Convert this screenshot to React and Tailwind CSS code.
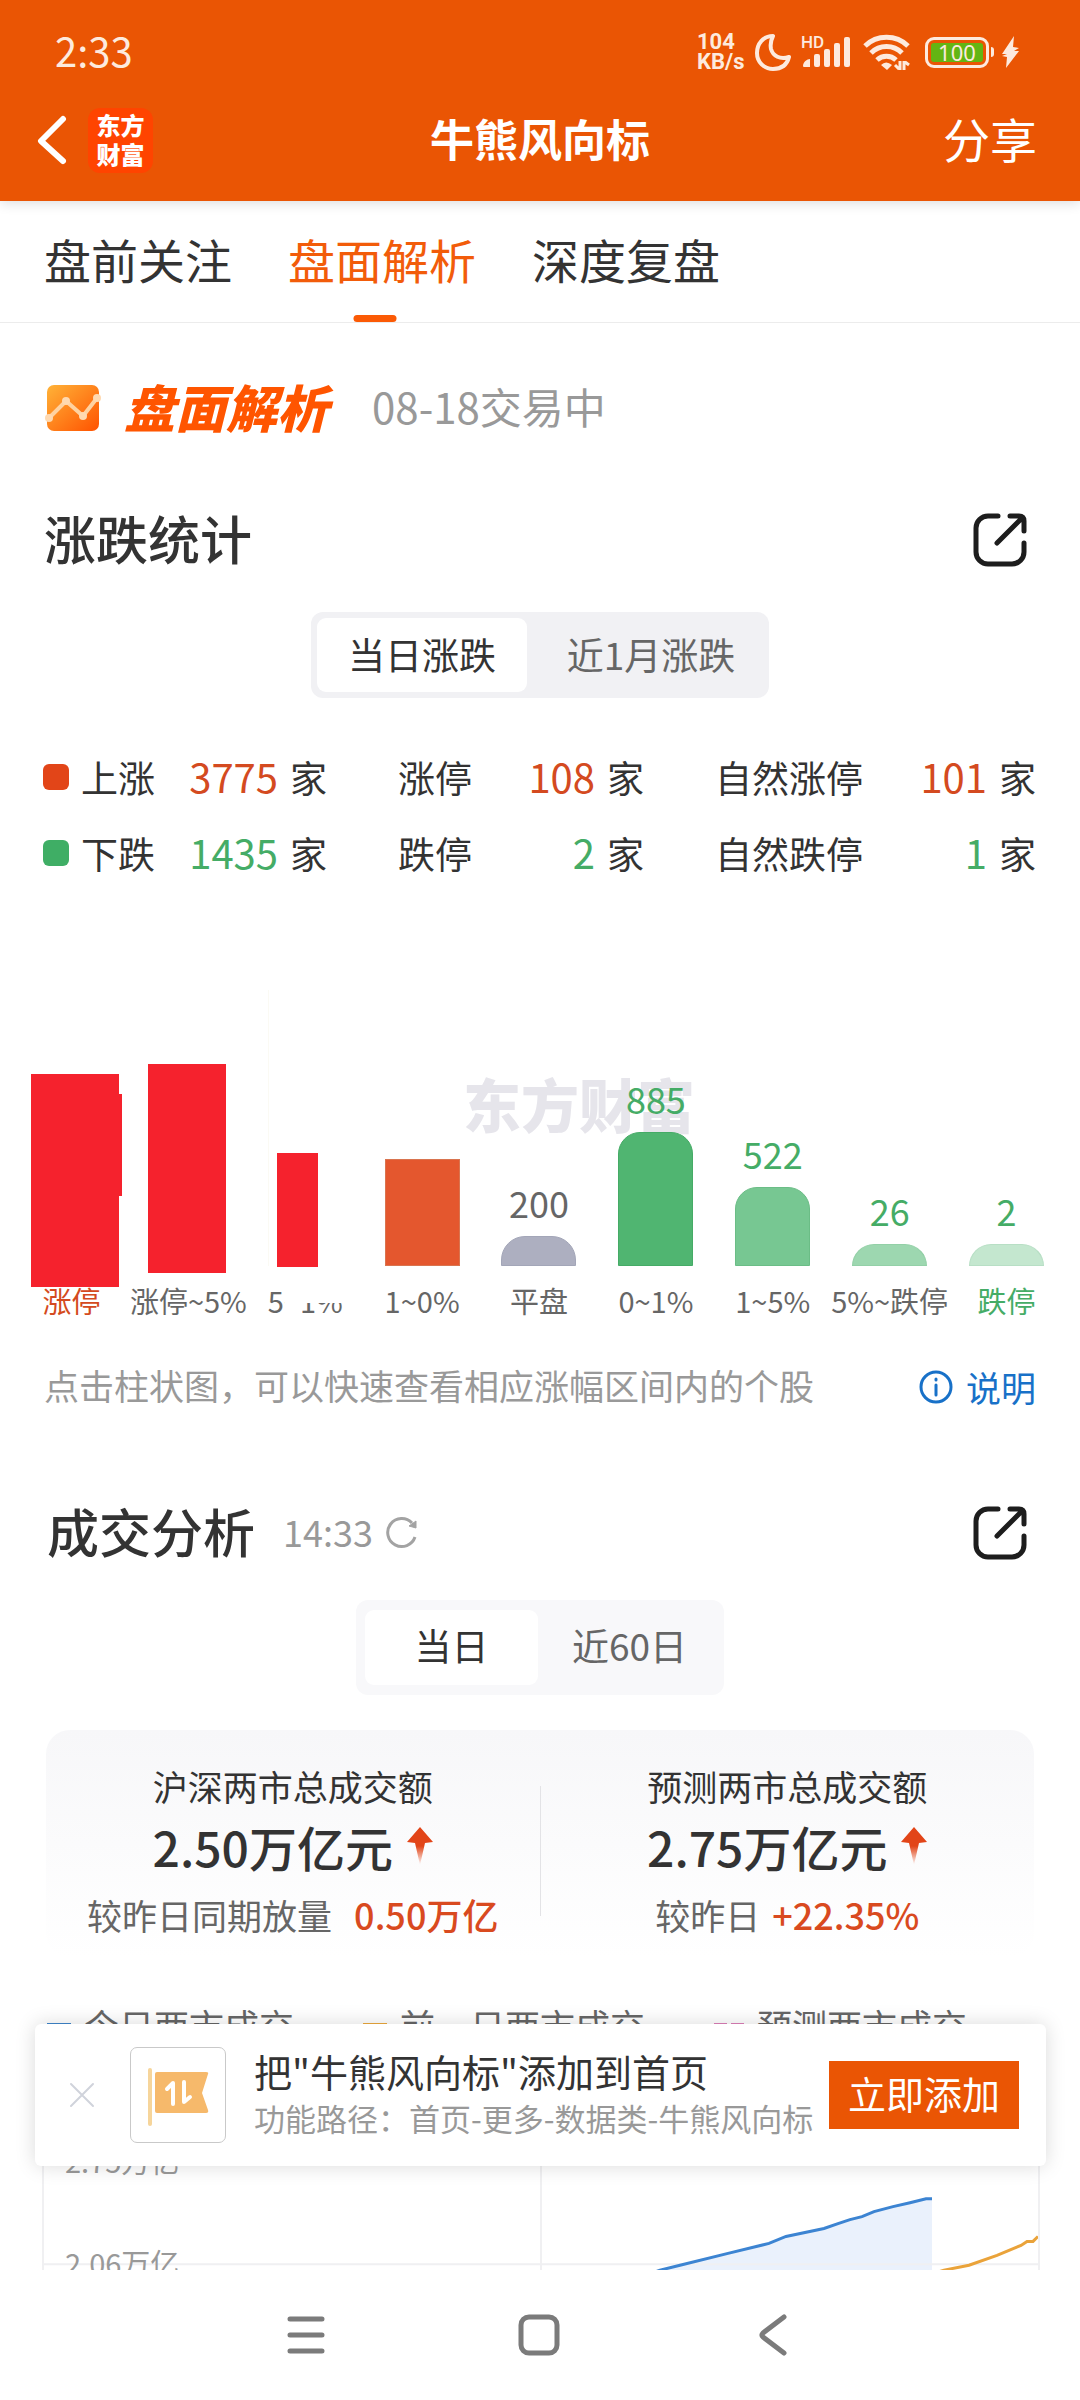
import React from "react";

const fontStack = "font-['Noto_Sans_CJK_SC','Noto_Sans',sans-serif]";

function StatusBar() {
  return (
    <div className="flex h-[104px] items-center justify-between pl-[55px] pr-[60px] text-[#fdeade]">
      <span className="pb-1 text-[40px] leading-[48px]">2:33</span>
      <div className="flex items-center">
        <div className="w-[58px] font-['Roboto',sans-serif] text-[22px] font-bold leading-[20px]">
          <div>104</div>
          <div>KB/s</div>
        </div>
        <svg width="36" height="38" viewBox="0 0 36 38" fill="none" stroke="currentColor" strokeWidth="4" strokeLinejoin="round" aria-hidden="true">
          <path d="M18 3C8 3 2 11 2 20c0 9 7 16 16 16 8 0 14-4 16-12-9 3-16-1-18-8-1-5 0-9 2-13Z" />
        </svg>
        <div className="relative ml-[10px] h-[34px] w-[52px]">
          <span className="absolute left-0 top-0 font-['Roboto',sans-serif] text-[17px] font-medium leading-[14px]">HD</span>
          <svg width="52" height="34" viewBox="0 0 52 34" fill="currentColor" aria-hidden="true">
            <path d="M2 31c0-4 4-7 7-7v8H3q-1 0-1-1Z" />
            <rect x="13" y="19" width="6" height="13" rx="2" />
            <rect x="23" y="14" width="6" height="18" rx="2" />
            <rect x="33" y="8" width="6" height="24" rx="2" />
            <rect x="43" y="2" width="6" height="30" rx="2" />
          </svg>
        </div>
        <svg className="ml-[10px]" width="48" height="36" viewBox="0 0 48 36" fill="none" stroke="currentColor" strokeWidth="5" aria-hidden="true">
          <path d="M2 12a31 31 0 0 1 43 0" />
          <path d="M8 19a22 22 0 0 1 31 0" />
          <path d="M14 26a14 14 0 0 1 19 0" />
          <path d="M18 31q5-5 11 0l-5 5z" fill="currentColor" stroke="none" />
          <path d="M37 27v9m-1-1-4-4M41 36v-9m1 1 4 3" strokeWidth="3" />
        </svg>
        <div className="ml-[14px] flex h-[31px] w-[64px] items-center rounded-[9px] border-[3px] border-current p-[3px]">
          <span className="flex h-[19px] flex-1 items-center justify-center rounded-[3px] bg-[#63b513] font-['Noto_Sans',sans-serif] text-[22px] leading-[19px]">
            100
          </span>
        </div>
        <span className="ml-[2px] h-[10px] w-[3px] rounded-r bg-current" />
        <svg className="ml-[7px]" width="19" height="32" viewBox="0 0 19 32" fill="currentColor" aria-hidden="true">
          <path d="M13 0 1 18h5L1 20l5 1-1 11 13-17h-5l5-3-6-1z" />
        </svg>
      </div>
    </div>
  );
}

function Header() {
  return (
    <header className="relative z-10 shrink-0 bg-[#ea5504] pb-[25px] text-white shadow-[0_2px_12px_rgba(0,0,0,0.14)]">
      <StatusBar />
      <div className="grid h-[72px] grid-cols-[1fr_auto_1fr] items-center px-[36px]">
        <div className="flex items-center gap-[20px]">
          <button aria-label="返回">
            <svg width="32" height="50" viewBox="0 0 32 50" fill="none" stroke="currentColor" strokeWidth="6" strokeLinecap="round" strokeLinejoin="round">
              <path d="M27 4 5 26l22 20" />
            </svg>
          </button>
          <div className="flex size-[65px] flex-col items-center justify-center rounded-[12px] bg-[#ff4400] pb-[2px] text-[24px] font-black leading-[29px]">
            <span>东方</span>
            <span>财富</span>
          </div>
        </div>
        <h1 className="pb-1 text-[44px] font-bold leading-[60px]">牛熊风向标</h1>
        <button className="justify-self-end pb-1 pr-[7px] text-[47px] leading-[60px]">分享</button>
      </div>
    </header>
  );
}

function Tabs() {
  const tabs = ["盘前关注", "盘面解析", "深度复盘"];
  return (
    <nav className="flex h-[122px] gap-[42px] border-b border-[#ececec] pl-[30px] text-[47px] text-[#333]">
      {tabs.map((t, i) => (
        <button key={t} className={`relative pb-1 pl-[14px] ${i === 1 ? "text-[#f25c0a]" : ""}`}>
          {t}
          {i === 1 && <span className="absolute bottom-0 left-1/2 h-[7px] w-[43px] -translate-x-1/2 rounded-full bg-[#fb5a05]" />}
        </button>
      ))}
    </nav>
  );
}

function PageTitle() {
  return (
    <div className="flex h-[70px] items-center">
      <svg width="58" height="46" viewBox="0 0 58 46" aria-hidden="true">
        <defs>
          <linearGradient id="badge" x1="0" y1="0" x2="1" y2="1">
            <stop offset="0" stopColor="#ffb338" />
            <stop offset="1" stopColor="#ff5200" />
          </linearGradient>
        </defs>
        <rect x="3" y="0" width="52" height="46" rx="7" fill="url(#badge)" />
        <path d="M5 33 22 16l17 15 14-18" fill="none" stroke="#ffd2a0" strokeWidth="4" />
        <g fill="#ffd9b0">
          <circle cx="5" cy="33" r="4" />
          <circle cx="22" cy="16" r="4" />
          <circle cx="39" cy="31" r="4" />
          <circle cx="53" cy="13" r="4" />
        </g>
      </svg>
      <h2 className="ml-[22px] pb-1 text-[51px] font-black italic leading-[60px] text-[#ff5500]">盘面解析</h2>
      <span className="ml-[44px] pb-1 text-[42px] leading-[60px] text-[#999]">08-18交易中</span>
    </div>
  );
}

function ExportIcon() {
  return (
    <svg width="54" height="54" viewBox="0 0 54 54" fill="none" stroke="#1d1d1d" strokeWidth="5" strokeLinecap="round" strokeLinejoin="round">
      <path d="M25 3H15A12 12 0 0 0 3 15v24a12 12 0 0 0 12 12h24a12 12 0 0 0 12-12V30" />
      <path d="M37 3h9q5 0 5 5v10M49 5 24 30" />
    </svg>
  );
}

function Stat({ width, color, label, value, mark }) {
  return (
    <div className={`flex items-center justify-between whitespace-nowrap ${width}`}>
      <span className="flex items-center gap-[12px]">
        {mark && <i className={`size-[26px] rounded-[6px] ${mark}`} />}
        {label}
      </span>
      <span>
        <span className={`mr-[12px] text-[40px] leading-[50px] ${color}`}>{value}</span>家
      </span>
    </div>
  );
}

function Stats() {
  const up = "text-[#d44a20]";
  const down = "text-[#45ac66]";
  return (
    <div className="-ml-px flex flex-col gap-[25px] text-[37px] leading-[50px] text-[#333]">
      <div className="flex justify-between">
        <Stat width="w-[284px]" mark="bg-[#e24518]" color={up} label="上涨" value="3775" />
        <Stat width="w-[246px]" color={up} label="涨停" value="108" />
        <Stat width="w-[321px]" color={up} label="自然涨停" value="101" />
      </div>
      <div className="flex justify-between">
        <Stat width="w-[284px]" mark="bg-[#3fae65]" color={down} label="下跌" value="1435" />
        <Stat width="w-[246px]" color={down} label="跌停" value="2" />
        <Stat width="w-[321px]" color={down} label="自然跌停" value="1" />
      </div>
    </div>
  );
}

const bars = [
  { label: "涨停", block: "left-[18px] w-[88px] h-[213px] -bottom-[21px]", notch: true, tone: "text-[#d44a20]" },
  { label: "涨停~5%", block: "left-[18px] w-[78px] h-[209px] -bottom-[7px]" },
  { label: "5~1%", block: "left-[30px] w-[41px] h-[114px] -bottom-[1px]", masked: true },
  { label: "1~0%", bar: "h-[107px] bg-[#e4572e] border-[#d9744f]" },
  { label: "平盘", value: "200", bar: "h-[30px] rounded-t-[24px] bg-[#adafc0] border-[#a3a6b8]", valueTone: "text-[#666]" },
  { label: "0~1%", value: "885", bar: "h-[134px] rounded-t-[22px] bg-[#50b571] border-[#45ab66]" },
  { label: "1~5%", value: "522", bar: "h-[79px] rounded-t-[22px] bg-[#77c792] border-[#6bbd86]" },
  { label: "5%~跌停", value: "26", bar: "h-[22px] rounded-t-[22px] bg-[#9dd7b0] border-[#93d0a7]" },
  { label: "跌停", value: "2", bar: "h-[22px] rounded-t-[22px] bg-[#c4e7cf] border-[#b8dfc5]", tone: "text-[#45ac66]" },
];

function BarChart() {
  return (
    <div className="relative grid grid-cols-9 pl-[13px] pr-[15px]">
      <span className="absolute left-[463px] top-[75px] text-[58px] font-black leading-[76px] text-[#e6e5eb]" aria-hidden="true">
        东方财富
      </span>
      <span className="absolute left-[268px] top-0 h-[276px] w-px bg-[#fbfaf4]" />
      {bars.map((b) => (
        <button key={b.label} className="relative flex min-w-0 flex-col items-center">
          <span className="relative flex h-[276px] w-full flex-col items-center justify-end">
            {b.value && <span className={`mb-[10px] text-[36px] leading-[48px] ${b.valueTone ?? "text-[#45ac66]"}`}>{b.value}</span>}
            {b.bar && <span className={`w-[75px] border ${b.bar}`} />}
            {b.block && (
              <span className={`absolute bg-[#f5222d] ${b.block}`}>
                {b.notch && <span className="absolute -right-[3px] top-[20px] h-[102px] w-[3px] bg-[#f5222d]" />}
              </span>
            )}
          </span>
          <span className={`relative mt-[13px] whitespace-nowrap text-[29px] leading-[42px] ${b.tone ?? "text-[#666]"}`}>
            {b.label}
            {b.masked && <span className="absolute -right-[2px] top-0 h-[24px] w-[53px] bg-white" />}
            {b.masked && <span className="absolute left-[17px] top-0 h-[40px] w-[17px] bg-white" />}
          </span>
        </button>
      ))}
    </div>
  );
}

function UpArrow() {
  return (
    <svg width="26" height="38" viewBox="0 0 26 38" aria-hidden="true">
      <defs>
        <linearGradient id="arrow" x1="0" y1="0" x2="0" y2="1">
          <stop offset="0.5" stopColor="#e24518" />
          <stop offset="1" stopColor="#e24518" stopOpacity="0" />
        </linearGradient>
      </defs>
      <path d="M13 0 26 15l-8 1-5 22L8 16l-8-1z" fill="url(#arrow)" />
    </svg>
  );
}

function Turnover({ title, value, note, delta, gap }) {
  return (
    <div className="flex flex-1 flex-col items-center whitespace-nowrap">
      <p className="text-[35px] leading-[50px] text-[#333]">{title}</p>
      <p className="mt-[2px] flex items-center gap-[14px] text-[48px] font-medium leading-[66px] text-[#333]">
        {value}
        <UpArrow />
      </p>
      <p className="mt-[10px] text-[35px] leading-[50px] text-[#666]">
        {note}
        <span className={`text-[36px] font-medium text-[#d94a1f] ${gap}`}>{delta}</span>
      </p>
    </div>
  );
}

function Legend() {
  return (
    <div className="mt-[43px] flex h-[50px] items-center gap-[69px] pl-[47px] text-[35px] text-[#666]">
      <span className="flex items-center gap-[13px]">
        <i className="h-[4px] w-[24px] bg-[#3f86cc]" />今日两市成交
      </span>
      <span className="flex items-center gap-[13px]">
        <i className="h-[4px] w-[24px] bg-[#eda93d]" />前一日两市成交
      </span>
      <span className="flex items-center gap-[13px]">
        <span className="flex gap-[4px]">
          <i className="h-[4px] w-[13px] bg-[#dd7fb8]" />
          <i className="h-[4px] w-[13px] bg-[#dd7fb8]" />
        </span>
        预测两市成交
      </span>
    </div>
  );
}

function LineChart() {
  return (
    <div className="relative ml-[42px] mr-[40px] mt-[110px] h-[140px] border-x-2 border-t border-[#f0f0f2] text-[29px] leading-[40px] text-[#999]">
      <svg className="absolute inset-0 size-full" viewBox="0 0 994 140" preserveAspectRatio="none" aria-hidden="true">
        <path d="M616 111 636 105 684 93 725 83 742 76 780 68 794 63 806 59 818 56 830 51 849 46 866 42 882 38H888V140H560Z" fill="#eaf1fc" />
        <path d="M0 104H994M497 0V140" stroke="#f0f0f2" strokeWidth="2" />
        <path d="M590 119 616 110 636 105 684 93 725 83 742 76 780 68 794 63 806 59 818 56 830 51 849 46 866 42 882 38H888" fill="none" stroke="#3c84d2" strokeWidth="3" />
        <path d="M880 116 900 110 925 105 953 95 977 85 983 81H989L994 76" fill="none" stroke="#eaa33a" strokeWidth="3" />
      </svg>
      <span className="absolute left-[21px] -top-[21px]">2.75万亿</span>
      <span className="absolute left-[21px] top-[81px]">2.06万亿</span>
    </div>
  );
}

function AddBanner() {
  return (
    <aside className="absolute bottom-[104px] left-[35px] right-[34px] flex h-[142px] items-center rounded-[6px] bg-white pl-[34px] pr-[27px] shadow-[0_0_20px_rgba(0,0,0,0.15)]">
      <button aria-label="关闭" className="shrink-0">
        <svg width="26" height="26" viewBox="0 0 26 26" stroke="#d0d3db" strokeWidth="2" strokeLinecap="round">
          <path d="M2 2 24 24M24 2 2 24" />
        </svg>
      </button>
      <div className="ml-[35px] flex size-[96px] shrink-0 items-center justify-center rounded-[7px] border border-[#c9c9c9] pt-[4px]">
        <svg width="62" height="60" viewBox="0 0 62 60" aria-hidden="true">
          <rect x="1" y="1" width="4" height="58" rx="2" fill="#f6d59b" />
          <path d="M10 5H59q3 0 2 2l-6 19 6 17q1 3-2 3H10q-2 0-2-2V7q0-2 2-2Z" fill="#f6b96b" />
          <path d="M26 37V16l-6 6M37 15v20l6-5" fill="none" stroke="#fff" strokeWidth="4" strokeLinecap="round" strokeLinejoin="round" />
        </svg>
      </div>
      <div className="ml-[28px] flex-1 whitespace-nowrap pb-1">
        <p className="text-[38px] leading-[50px] text-[#333]">把"牛熊风向标"添加到首页</p>
        <p className="text-[31px] leading-[44px] text-[#999]">功能路径：首页-更多-数据类-牛熊风向标</p>
      </div>
      <button className="h-[68px] w-[190px] shrink-0 bg-[#ea5504] pb-1 text-[38px] leading-[60px] text-white">立即添加</button>
    </aside>
  );
}

function SystemNav() {
  return (
    <nav className="relative z-10 flex h-[130px] shrink-0 items-center justify-center gap-[192px] bg-white pr-[2px]">
      <button aria-label="最近任务">
        <svg width="40" height="42" viewBox="0 0 40 42" stroke="#7b7b7b" strokeWidth="5" strokeLinecap="round">
          <path d="M4 5h32M4 21h32M4 37h32" />
        </svg>
      </button>
      <button aria-label="主屏幕">
        <svg width="42" height="42" viewBox="0 0 42 42" fill="none" stroke="#7b7b7b" strokeWidth="5">
          <rect x="3" y="3" width="36" height="36" rx="8" />
        </svg>
      </button>
      <button aria-label="后退">
        <svg width="40" height="42" viewBox="0 0 40 42" fill="none" stroke="#7b7b7b" strokeWidth="5" strokeLinecap="round" strokeLinejoin="round">
          <path d="M32 3 11 19q-2 2 0 4l21 16" />
        </svg>
      </button>
    </nav>
  );
}

export default function App() {
  return (
    <div className={`flex h-screen flex-col overflow-hidden bg-white ${fontStack}`}>
      <Header />
      <div className="relative min-h-0 flex-1">
        <main className="h-full overflow-hidden">
          <Tabs />
          <section className="px-[44px] pt-[50px]">
            <PageTitle />
            <div className="mt-[62px] flex h-[70px] items-center justify-between pr-[9px]">
              <h2 className="pb-1 text-[52px] font-medium leading-[66px] text-[#333]">涨跌统计</h2>
              <button aria-label="分享涨跌统计"><ExportIcon /></button>
            </div>
            <div className="mt-[37px] flex justify-center">
              <div className="flex h-[86px] rounded-[12px] bg-[#f1f1f4] p-[6px] text-[37px]">
                <button className="w-[210px] rounded-[9px] bg-white text-[#333]">当日涨跌</button>
                <button className="w-[236px] pl-[12px] text-[#666]">近1月涨跌</button>
              </div>
            </div>
            <div className="mt-[53px]"><Stats /></div>
          </section>
          <section className="mt-[112px]">
            <BarChart />
            <div className="mt-[41px] flex h-[50px] items-center justify-between px-[44px] text-[35px] leading-[50px]">
              <p className="pb-1 text-[#999]">点击柱状图，可以快速查看相应涨幅区间内的个股</p>
              <button className="flex items-center gap-[13px] text-[#1871c8]">
                <svg width="34" height="34" viewBox="0 0 34 34" fill="none" stroke="currentColor" strokeWidth="3" strokeLinecap="round">
                  <circle cx="17" cy="17" r="15" />
                  <path d="M17 15v10M17 9v1" />
                </svg>
                说明
              </button>
            </div>
          </section>
          <section className="mt-[86px]">
            <div className="flex h-[70px] items-center pl-[47px] pr-[53px]">
              <h2 className="pb-1 text-[52px] font-medium leading-[66px] text-[#333]">成交分析</h2>
              <span className="ml-[28px] pb-1 text-[36px] leading-[50px] text-[#999]">14:33</span>
              <button aria-label="刷新" className="ml-[12px]">
                <svg width="34" height="34" viewBox="0 0 34 34" fill="none" stroke="#a3a3a3" strokeWidth="3">
                  <path d="M30 21A14 14 0 1 1 27 7" />
                  <path d="m24 10 7 2V5Z" fill="#a3a3a3" strokeWidth="1" />
                </svg>
              </button>
              <button aria-label="分享成交分析" className="ml-auto"><ExportIcon /></button>
            </div>
            <div className="mt-[32px] flex justify-center">
              <div className="flex h-[95px] rounded-[12px] bg-[#f8f8fa] px-[9px] py-[10px] text-[37px]">
                <button className="w-[173px] rounded-[9px] bg-white pb-1 text-[#333]">当日</button>
                <button className="w-[177px] pb-1 pl-[6px] text-[#666]">近60日</button>
              </div>
            </div>
            <div className="mx-[46px] mt-[35px] flex items-center rounded-[24px] bg-linear-to-b from-[#f7f7f9] to-white pb-[17px] pt-[31px]">
              <Turnover title="沪深两市总成交额" value="2.50万亿元" note="较昨日同期放量" delta="0.50万亿" gap="ml-[22px]" />
              <span className="h-[130px] w-px bg-[#e3e3e6]" />
              <Turnover title="预测两市总成交额" value="2.75万亿元" note="较昨日" delta="+22.35%" gap="ml-[12px]" />
            </div>
            <Legend />
            <LineChart />
          </section>
        </main>
        <AddBanner />
      </div>
      <SystemNav />
    </div>
  );
}
